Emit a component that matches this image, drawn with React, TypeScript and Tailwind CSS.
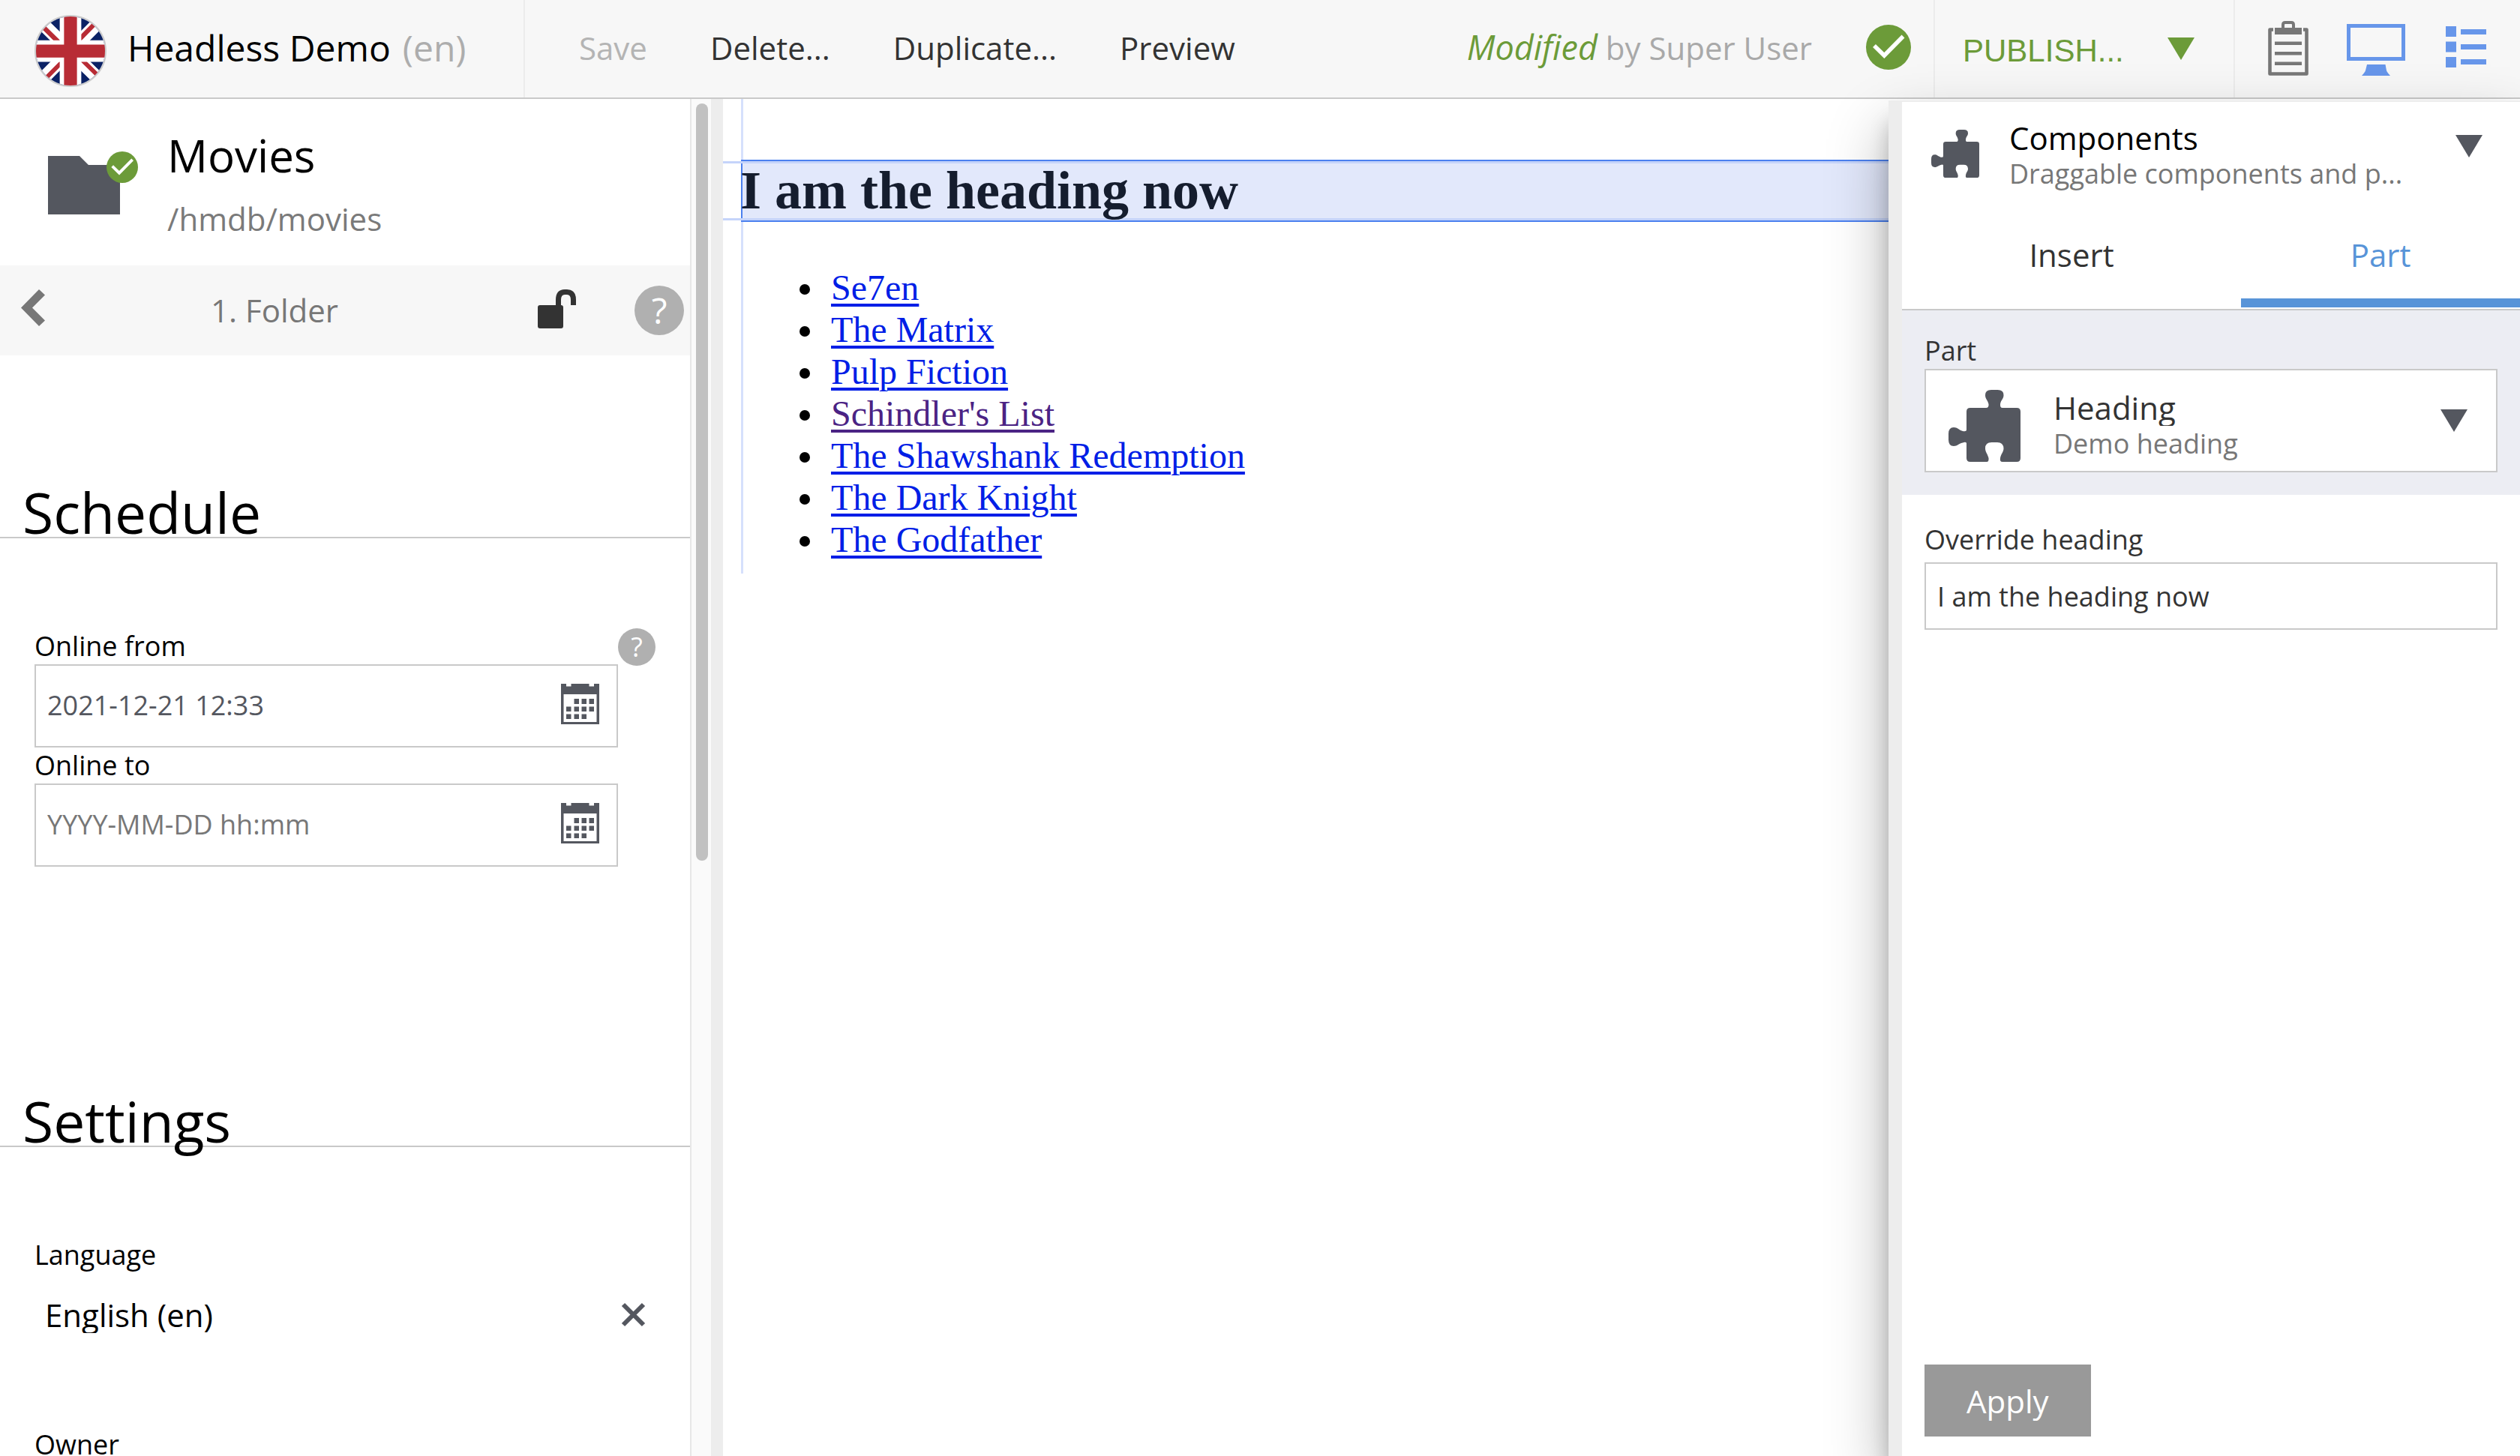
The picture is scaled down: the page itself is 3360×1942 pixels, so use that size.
import React, { useState } from "react";

function FlagIcon() {
  return (
    <svg viewBox="0 0 512 512" className="size-full" aria-hidden="true">
      <path fill="#0b2265" d="M0 0h512v512H0z" />
      <path fill="#fff" d="M512 0v64L322 256l190 187v69h-67L254 324 68 512H0v-68l186-187L0 74V0h62l192 188L440 0z" />
      <path fill="#b82c35" d="m184 324 11 34L42 512H0v-3zm124-12 54 8 150 147v45zM512 0 320 196l-4-44L466 0zM0 1l193 189-59-8L0 49z" />
      <path fill="#fff" d="M176 0v512h160V0zM0 176v160h512V176z" />
      <path fill="#b82c35" d="M0 208v96h512v-96zM208 0v512h96V0z" />
    </svg>
  );
}

function CheckIcon({ className }: { className: string }) {
  return (
    <svg viewBox="0 0 60 60" className={className} aria-hidden="true">
      <circle cx="30" cy="30" r="30" fill="#6c9b39" />
      <path d="M11 28L24.3 41L49.5 15.5" fill="none" stroke="#fff" strokeWidth="5.5" />
    </svg>
  );
}

function CaretIcon({ className }: { className: string }) {
  return (
    <svg viewBox="0 0 36 30" className={`h-[30px] w-9 shrink-0 ${className}`} fill="currentColor" aria-hidden="true">
      <path d="M0 0H36L18 30Z" />
    </svg>
  );
}

function PuzzleIcon({ className }: { className: string }) {
  return (
    <svg viewBox="0 0 96 96" className={`shrink-0 text-[#54575f] ${className}`} fill="currentColor" aria-hidden="true">
      <path d="M29 24H50Q54 24 53.5 19C52 13 49 12 49 7Q49 0 57 0H65.5Q73.5 0 73.5 7C73.5 12 70 13 69 19Q68.5 24 72 24H91Q96 24 96 29V91Q96 96 91 96H72Q68 96 69 91C70 85 73.5 83 73.5 78Q73 70 65 70H57.5Q49 70 49 78C49 83 52 85 53.5 91Q54 96 51 96H29Q24 96 24 91V71Q23 69 19 70.5C13 72 12 75 7 75Q0 75 0 66.5V58.5Q0 50 7 50C12 50 13 53 19 55Q24 56 24 53V29Q24 24 29 24Z" />
    </svg>
  );
}

function ClipboardIcon() {
  return (
    <svg viewBox="0 0 54 73" className="h-[73px] w-[54px]" aria-hidden="true">
      <g fill="none" stroke="#777" strokeLinejoin="round">
        <path d="M7 11.5H2.5V70.5H51.5V11.5H47" strokeWidth="4.6" />
        <path d="M20 11V5Q20 2 23 2H31Q34 2 34 5V11" strokeWidth="4" />
      </g>
      <path d="M9 9H45V18H9ZM9 27.5H45V32H9ZM9 41H45V45.500H9ZM9 54.500H45V59H9Z" fill="#777" />
    </svg>
  );
}

function MonitorIcon() {
  return (
    <svg viewBox="0 0 78 69" className="h-[69px] w-[78px]" fill="#6796ea" aria-hidden="true">
      <path fillRule="evenodd" d="M0 0H78V49H0ZM5 5V44H73V5Z" />
      <path d="M27 54H51.500L53 62Q53.500 64 58 69H20Q24.500 64 25 62Z" />
    </svg>
  );
}

function ListIcon() {
  return (
    <svg viewBox="0 0 54 55" className="h-[55px] w-[54px]" fill="#6796ea" aria-hidden="true">
      <path d="M0 0H14V14H0ZM0 20.500H14V34.500H0ZM0 41H14V55H0ZM20 4H54V11H20ZM20 24H54V31H20ZM20 44H54V51H20Z" />
    </svg>
  );
}

function CalendarIcon() {
  return (
    <svg viewBox="0 0 51 54" className="h-[54px] w-[51px]" fill="#54575f" aria-hidden="true">
      <path fillRule="evenodd" d="M0 0H7V3.500H13.500V0H37.500V3.500H44V0H51V54H0ZM3.500 14V51H47.500V14Z" />
      <path d="M17.500 20H24V27H17.500ZM27.500 20H34V27H27.500ZM37.500 20H44V27H37.500ZM7 30.500H13.500V37H7ZM17.500 30.500H24V37H17.500ZM27.500 30.500H34V37H27.500ZM37.500 30.500H44V37H37.500ZM7 40.500H13.500V47H7ZM17.500 40.500H24V47H17.500ZM27.500 40.500H34V47H27.500Z" />
    </svg>
  );
}

function Header() {
  return (
    <header className="flex h-[132px] shrink-0 border-b-2 border-[#c9c9c9] bg-[#f7f7f7]">
      <div className="flex w-[700px] shrink-0 items-center border-r-2 border-[#ececec] pb-0.5 pl-[46px]">
        <div className="mt-2 size-24 shrink-0 overflow-hidden rounded-full border-2 border-[#ccc]">
          <FlagIcon />
        </div>
        <h1 className="ml-7 flex gap-4 text-5xl text-black">
          Headless Demo <span className="text-[#adadad]">(en)</span>
        </h1>
      </div>
      <nav className="flex items-center gap-[84px] pb-1 pl-[72px] text-[42px]">
        <button disabled className="text-[#b4b4b4]">Save</button>
        <button>Delete...</button>
        <button>Duplicate...</button>
        <button>Preview</button>
      </nav>
      <div className="flex flex-1 items-center justify-end gap-[72px] pb-1 pr-[30px] text-[42px] text-[#a9a9a9]">
        <p>
          <em className="text-[45px] leading-none text-[#6c9b39]">Modified</em> by Super User
        </p>
        <CheckIcon className="size-[60px]" />
      </div>
      <div className="flex w-[402px] shrink-0 items-center justify-between border-x-2 border-[#ececec] pl-[37px] pr-[52px] text-[#6c9b39]">
        <button className="pt-1 font-['Liberation_Sans',sans-serif] text-[42px]">PUBLISH...</button>
        <button aria-label="More publish actions">
          <CaretIcon className="" />
        </button>
      </div>
      <div className="flex w-[380px] shrink-0 items-center pb-0.5 pl-11">
        <button aria-label="Page clipboard"><ClipboardIcon /></button>
        <button aria-label="Page preview" className="ml-[51px] pt-1"><MonitorIcon /></button>
        <button aria-label="Components panel" className="ml-[54px] pb-1"><ListIcon /></button>
      </div>
    </header>
  );
}

function DateField({ id, label, value, placeholder }: { id: string; label: string; value?: string; placeholder?: string }) {
  return (
    <div className="flex flex-col">
      <label htmlFor={id} className="text-4xl leading-[48px] text-black">{label}</label>
      <div className="flex h-[111px] items-center border-2 border-[#c9c9c9] bg-white pb-0.5 pr-[23px]">
        <input
          id={id}
          defaultValue={value}
          placeholder={placeholder}
          className="min-w-0 flex-1 bg-transparent pl-[15px] text-4xl text-[#54575f] outline-none placeholder:text-[#777]"
        />
        <button aria-label={`Pick date: ${label}`} className="mb-1"><CalendarIcon /></button>
      </div>
    </div>
  );
}

function SectionTitle({ children }: { children: React.ReactNode }) {
  return <h2 className="h-[70px] border-b-2 border-[#c9c9c9] pl-[30px] text-[75px] leading-[70px] text-black">{children}</h2>;
}

function Sidebar() {
  return (
    <aside className="flex w-[920px] shrink-0 flex-col overflow-hidden bg-white">
      <div className="flex h-[222px] shrink-0 pl-16">
        <div className="relative mt-[76px] h-[78px] w-24 shrink-0">
          <svg viewBox="0 0 96 78" className="h-[78px] w-24" aria-hidden="true">
            <path d="M0 0H42L54 12H96V78H0Z" fill="#54575f" />
          </svg>
          <CheckIcon className="absolute -right-6 -top-1.5 size-[42px]" />
        </div>
        <div className="ml-[63px] pt-[33px]">
          <p className="text-6xl leading-[84px] text-black">Movies</p>
          <p className="text-[42px] leading-[86px] text-[#7a7a7a]">/hmdb/movies</p>
        </div>
      </div>
      <div className="flex h-[120px] shrink-0 items-center bg-[#f7f7f7] pl-7 pr-2 text-[42px] text-[#777]">
        <button aria-label="Previous page" className="pb-2">
          <svg viewBox="0 0 32 49" className="h-[49px] w-8" fill="#777" aria-hidden="true">
            <path d="M0 24.500L24 0L32 7.500L15 24.500L32 41.500L24 49Z" />
          </svg>
        </button>
        <p className="flex-1 pb-0.5 pl-[221px]">1. Folder</p>
        <button aria-label="Lock page" className="mb-1">
          <svg viewBox="0 0 51 52" className="h-[52px] w-[51px]" aria-hidden="true">
            <rect y="21" width="34" height="31" rx="3" fill="#333" />
            <path d="M27.500 23V14Q27.500 3.500 36 3.500H39Q47.500 3.500 47.500 14V21" fill="none" stroke="#333" strokeWidth="7" />
          </svg>
        </button>
        <button aria-label="Help" className="ml-[78px] flex size-[66px] items-center justify-center rounded-full bg-[#b0b0b0] text-5xl text-white">?</button>
      </div>

      <section className="mt-[174px] shrink-0">
        <SectionTitle>Schedule</SectionTitle>
        <div className="mt-[120px] flex pl-[46px]">
          <div className="flex w-[778px] flex-col">
            <DateField id="online-from" label="Online from" value="2021-12-21 12:33" />
            <DateField id="online-to" label="Online to" placeholder="YYYY-MM-DD hh:mm" />
          </div>
          <button aria-label="Help: Online from" className="flex size-[50px] items-center justify-center rounded-full bg-[#b0b0b0] text-4xl text-white">?</button>
        </div>
      </section>

      <section className="mt-[304px] shrink-0">
        <SectionTitle>Settings</SectionTitle>
        <div className="mt-[120px] pl-[46px] text-black">
          <p className="text-4xl leading-[48px]">Language</p>
          <div className="flex h-[110px] items-center justify-between pl-3.5 pr-[59px] text-[42px]">
            <p className="h-[50px] overflow-hidden leading-[52px]">English (en)</p>
            <button aria-label="Clear language">
              <svg viewBox="0 0 33 33" className="size-[33px]" aria-hidden="true">
                <path d="M3 3L30 30M30 3L3 30" stroke="#54575f" strokeWidth="6" />
              </svg>
            </button>
          </div>
          <p className="mt-[95px] text-4xl leading-[48px]">Owner</p>
        </div>
      </section>
    </aside>
  );
}

const movies = [
  { title: "Se7en" },
  { title: "The Matrix" },
  { title: "Pulp Fiction" },
  { title: "Schindler's List", visited: true },
  { title: "The Shawshank Redemption" },
  { title: "The Dark Knight" },
  { title: "The Godfather" },
];

function Canvas() {
  return (
    <main className="min-w-0 flex-1 bg-white pl-6 font-['Liberation_Serif',serif] text-black">
      <div className="border-l-[3px] border-[#d6e0fc] pb-[17px] pt-[81px]">
        <div className="relative -ml-[3px] h-[83px] border-y-2 border-l-2 border-[#4b80ef] bg-[#e2e8fb]">
          <div className="absolute -left-[26px] right-0 top-0 h-[3px] bg-[#c5d4fa]" />
          <div className="absolute -left-[26px] bottom-0 right-0 h-[3px] bg-[#c5d4fa]" />
          <h2 className="relative -ml-[3px] text-7xl font-bold leading-[78px] text-[#151d2e]">I am the heading now</h2>
        </div>
        <ul className="mt-[60px] list-disc pl-[110px] text-5xl leading-[56px]">
          {movies.map((movie) => (
            <li key={movie.title} className="pl-[7px]">
              <a
                href="#"
                className={`underline decoration-4 underline-offset-[5px] ${movie.visited ? "text-[#4b2384]" : "text-[#001ee6]"}`}
              >
                {movie.title}
              </a>
            </li>
          ))}
        </ul>
      </div>
    </main>
  );
}

function ComponentsPanel() {
  const [tab, setTab] = useState("part");
  return (
    <aside className="relative z-10 mt-0.5 flex w-[842px] shrink-0 flex-col border-l-[18px] border-t-2 border-[#ededed] bg-white shadow-[0_38px_76px_rgba(0,0,0,0.3),0_30px_24px_rgba(0,0,0,0.18)]">
      <div className="flex h-[146px] shrink-0 pl-[39px] pr-[50px] pt-6">
        <PuzzleIcon className="mt-[13px] size-16" />
        <div className="ml-10 w-[530px]">
          <h2 className="text-[42px] leading-[48px] text-black">Components</h2>
          <p className="text-4xl leading-[48px] text-[#777]">Draggable components and p...</p>
        </div>
        <button aria-label="Components menu" className="ml-auto mt-5 self-start text-[#54575f]">
          <CaretIcon className="" />
        </button>
      </div>
      <div role="tablist" className="flex shrink-0 border-b-2 border-[#c9c9c9] pb-0.5 text-[42px]">
        <button
          role="tab"
          aria-selected={tab === "insert"}
          onClick={() => setTab("insert")}
          className={`h-32 flex-[452] border-b-12 pb-0.5 ${tab === "insert" ? "border-[#5894d8] text-[#5894d8]" : "border-transparent"}`}
        >
          Insert
        </button>
        <button
          role="tab"
          aria-selected={tab === "part"}
          onClick={() => setTab("part")}
          className={`h-32 flex-[372] border-b-12 pb-0.5 ${tab === "part" ? "border-[#5894d8] text-[#5894d8]" : "border-transparent"}`}
        >
          Part
        </button>
      </div>
      <div className="shrink-0 bg-[#ecedf3] p-[30px]">
        <label htmlFor="part-select" className="block text-4xl leading-[48px]">Part</label>
        <button
          id="part-select"
          aria-haspopup="listbox"
          className="flex h-[138px] w-full items-center border-2 border-[#c9c9c9] bg-white pl-[30px] pr-[38px] text-left"
        >
          <PuzzleIcon className="mt-[14px] size-24" />
          <span className="ml-11 mt-[14px] flex flex-1 flex-col">
            <span className="h-12 overflow-hidden text-[42px] leading-[48px]">Heading</span>
            <span className="text-4xl leading-[48px] text-[#777]">Demo heading</span>
          </span>
          <CaretIcon className="text-[#54575f]" />
        </button>
      </div>
      <div className="flex flex-col px-[30px] pt-9">
        <label htmlFor="override-heading" className="mb-1.5 text-4xl leading-[48px]">Override heading</label>
        <input
          id="override-heading"
          defaultValue="I am the heading now"
          className="h-[90px] border-2 border-[#c9c9c9] bg-white px-[15px] text-4xl outline-none"
        />
      </div>
      <div className="mt-auto px-[30px] pb-[26px]">
        <button className="h-24 bg-[#999] px-14 text-[42px] text-white">Apply</button>
      </div>
    </aside>
  );
}

export default function App() {
  return (
    <div className="flex h-screen flex-col overflow-hidden bg-white font-['Open_Sans',sans-serif] text-[#333]">
      <Header />
      <div className="flex min-h-0 flex-1">
        <Sidebar />
        <div className="flex w-7 shrink-0 flex-col border-l-2 border-[#e7e7e7] bg-[#fafafa] pl-1.5 pt-1.5">
          <div className="h-[56%] w-4 rounded-full bg-[#c1c1c1]" />
        </div>
        <div className="w-4 shrink-0 bg-[#ededed]" />
        <Canvas />
        <ComponentsPanel />
      </div>
    </div>
  );
}
